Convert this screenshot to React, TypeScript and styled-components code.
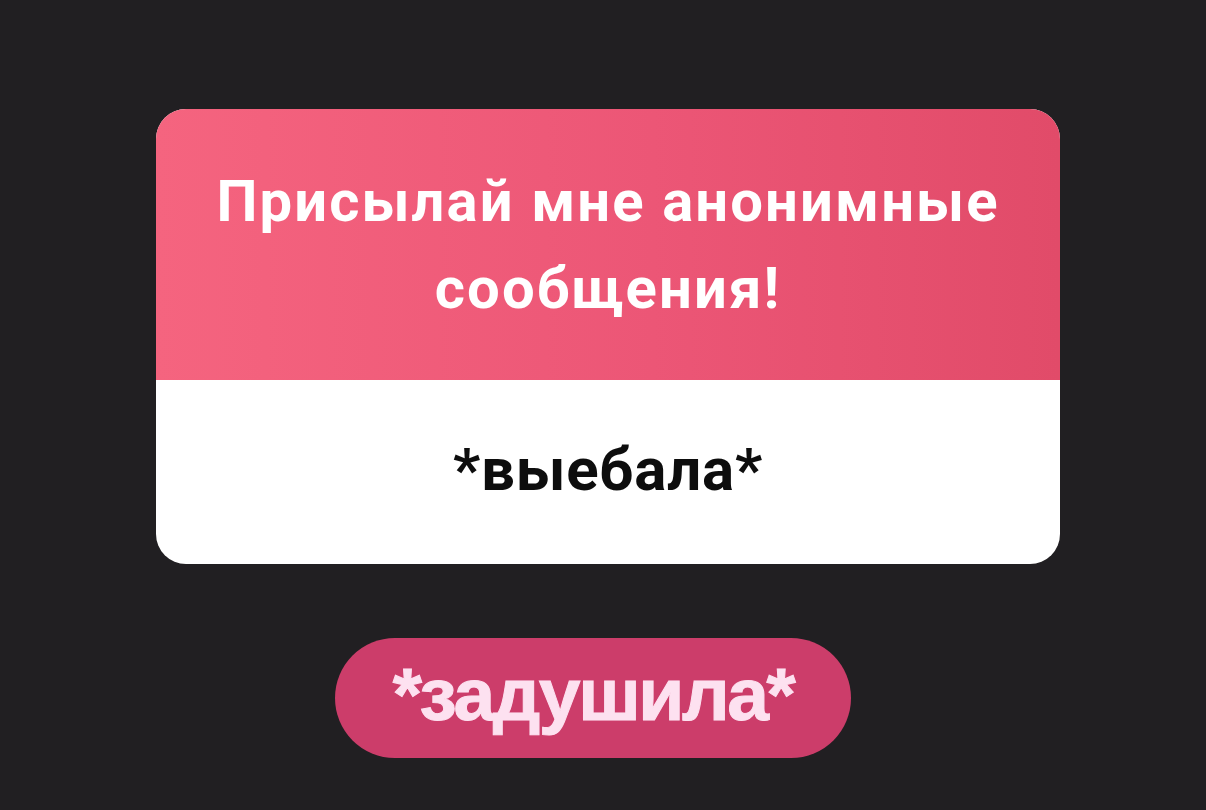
import React from "react";
import styled, { createGlobalStyle } from "styled-components";

const GlobalStyle = createGlobalStyle`
  html, body {
    margin: 0;
    padding: 0;
    background: #211f22;
  }

  body {
    font-family: Roboto, "Liberation Sans", sans-serif;
  }
`;

const Page = styled.div`
  width: 1206px;
  height: 810px;
  box-sizing: border-box;
  padding-top: 109px;
  display: flex;
  flex-direction: column;
  align-items: center;
  overflow: hidden;
`;

const Card = styled.div`
  width: 904px;
  margin-left: 10px;
  border-radius: 30px;
  overflow: hidden;
  background: #ffffff;
`;

const Header = styled.div`
  height: 271px;
  box-sizing: border-box;
  padding-top: 49px;
  background: linear-gradient(90deg, #f5647f 0%, #ec5676 55%, #e14b69 100%);
  display: flex;
  justify-content: center;
`;

const Title = styled.h1`
  margin: 0;
  width: 860px;
  font-family: Roboto, "Liberation Sans", sans-serif;
  font-weight: 700;
  font-size: 58px;
  line-height: 87px;
  letter-spacing: 2.1px;
  color: #ffffff;
  text-align: center;
`;

const Body = styled.div`
  height: 184px;
  display: flex;
  align-items: center;
  justify-content: center;
  padding-bottom: 6px;
  box-sizing: border-box;
`;

const Message = styled.p`
  margin: 0;
  font-family: Roboto, "Liberation Sans", sans-serif;
  font-weight: 700;
  font-size: 60px;
  letter-spacing: 0.8px;
  color: #0d0d0d;
`;

const ReplyButton = styled.button`
  margin-top: 74px;
  margin-right: 20px;
  width: 516px;
  height: 120px;
  border: none;
  border-radius: 60px;
  background: #cc3d6a;
  color: #fde1f0;
  font-family: "Liberation Sans", Arial, sans-serif;
  font-weight: 700;
  font-size: 75px;
  letter-spacing: -2.4px;
  -webkit-text-stroke: 1px #fde1f0;
  display: flex;
  align-items: center;
  justify-content: center;
  padding: 0 0 8px;
  cursor: pointer;
`;

export default function App() {
  return (
    <>
      <GlobalStyle />
      <Page>
        <Card>
          <Header>
            <Title>Присылай мне анонимные сообщения!</Title>
          </Header>
          <Body>
            <Message>*выебала*</Message>
          </Body>
        </Card>
        <ReplyButton>*задушила*</ReplyButton>
      </Page>
    </>
  );
}
